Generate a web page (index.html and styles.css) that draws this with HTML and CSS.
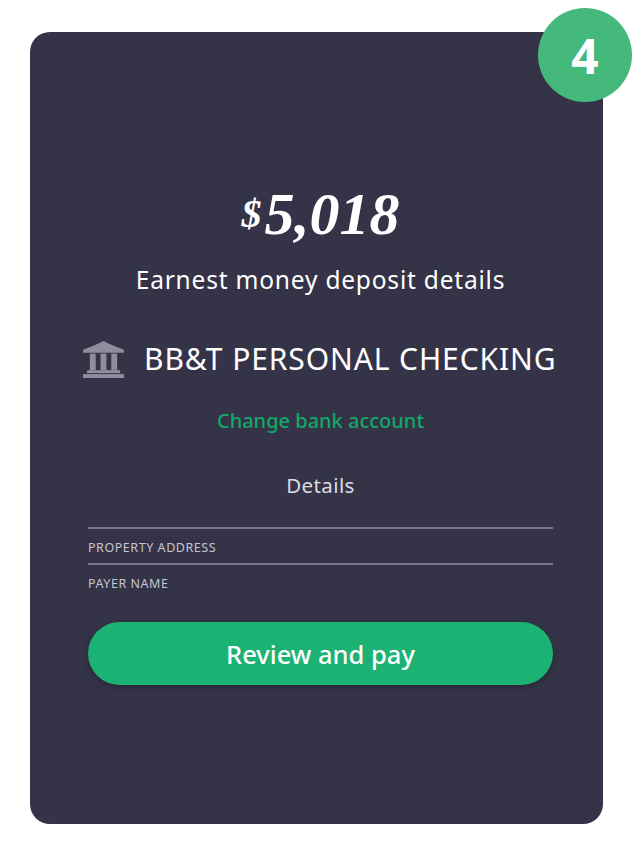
FILE: index.html
```html
<!DOCTYPE html>
<html lang="en">

<head>
    <meta charset="UTF-8">
    <meta name="viewport" content="width=device-width, initial-scale=1.0">
    <title>Earnest money deposit</title>
    <link rel="stylesheet" href="styles.css">
</head>

<body>
    <section class="card">
        <div class="step-badge">4</div>
        <h1 class="amount"><span class="currency">$</span>5,018</h1>
        <h2 class="subtitle">Earnest money deposit details</h2>
        <div class="bank">
            <svg class="bank-icon" viewBox="0 0 42 38" aria-hidden="true">
                <path d="M21 0 C27 3 34 6 42 9 V12 H0 V9 C8 6 15 3 21 0 Z" />
                <rect x="7" y="13" width="6" height="17" />
                <rect x="18" y="13" width="6" height="17" />
                <rect x="29" y="13" width="6" height="17" />
                <rect x="4" y="30" width="34" height="3" />
                <rect x="0" y="34" width="42" height="4" />
            </svg>
            <span class="bank-name">BB&amp;T PERSONAL CHECKING</span>
        </div>
        <a class="change-link" href="#">Change bank account</a>
        <h3 class="details-title">Details</h3>
        <div class="fields">
            <div class="field">PROPERTY ADDRESS</div>
            <div class="field">PAYER NAME</div>
        </div>
        <button class="pay-button">Review and pay</button>
    </section>
</body>

</html>
```

FILE: styles.css
```css
* {
    margin: 0;
    box-sizing: border-box;
}

body {
    background-color: #ffffff;
    font-family: "Noto Sans", "Open Sans", sans-serif;
    padding: 32px 37px 26px 30px;
}

.card {
    position: relative;
    height: 792px;
    background-color: #353347;
    border-radius: 20px;
    padding: 146px 50px 0 58px;
    display: flex;
    flex-direction: column;
    align-items: center;
    color: #ffffff;
}

.step-badge {
    position: absolute;
    top: -24px;
    right: -29px;
    width: 94px;
    height: 94px;
    border-radius: 50%;
    background-color: #45b97c;
    display: flex;
    align-items: center;
    justify-content: center;
    font-family: "Open Sans", sans-serif;
    font-size: 48px;
    font-weight: 700;
}

.amount {
    font-family: "Liberation Serif", serif;
    font-style: italic;
    font-weight: 700;
    font-size: 60px;
    line-height: 72px;
}

.currency {
    font-size: 40px;
    vertical-align: 7px;
    margin-right: 3px;
}

.subtitle {
    margin-top: 14px;
    font-size: 24.5px;
    font-weight: 400;
    letter-spacing: 0.8px;
    line-height: 32px;
    white-space: nowrap;
}

.bank {
    margin-top: 43px;
    align-self: stretch;
    margin-left: -5px;
    margin-right: -5px;
    display: flex;
    align-items: center;
    gap: 20px;
}

.bank-icon {
    width: 41px;
    height: 37px;
    fill: #8f8e9c;
    flex-shrink: 0;
}

.bank-name {
    font-size: 30px;
    font-weight: 400;
    letter-spacing: 0.9px;
    line-height: 40px;
    white-space: nowrap;
}

.change-link {
    margin-top: 28px;
    color: #12a866;
    font-size: 20px;
    font-weight: 500;
    line-height: 28px;
    text-decoration: none;
}

.details-title {
    margin-top: 36px;
    color: #dcdce2;
    font-size: 20.5px;
    font-weight: 400;
    letter-spacing: 0.4px;
    line-height: 28px;
}

.fields {
    margin-top: 28px;
    align-self: stretch;
    font-size: 12.5px;
    letter-spacing: 0.55px;
    color: #c6c5cf;
}

.field {
    height: 36px;
    padding-top: 11px;
    line-height: 16px;
    border-top: 2px solid #77768a;
}

.pay-button {
    margin-top: 23px;
    align-self: stretch;
    height: 63px;
    border: none;
    border-radius: 32px;
    background-color: #1bb273;
    color: #ffffff;
    font-family: inherit;
    font-size: 25.5px;
    font-weight: 500;
    box-shadow: 0 2px 6px rgba(0, 0, 0, 0.25);
}
```
